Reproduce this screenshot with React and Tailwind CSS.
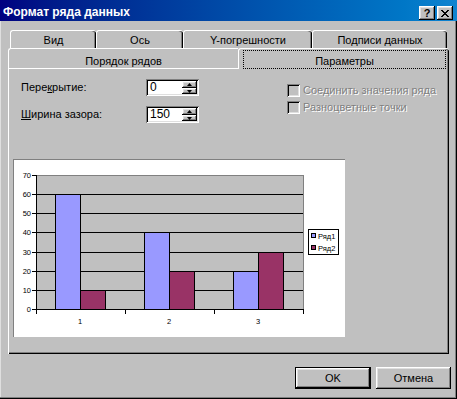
import React from "react";

const raised =
  "shadow-[inset_-1px_-1px_0_#000,inset_1px_1px_0_#fff,inset_-2px_-2px_0_#808080,inset_2px_2px_0_#dfdfdf]";
const sunken =
  "shadow-[inset_1px_1px_0_#808080,inset_-1px_-1px_0_#fff,inset_2px_2px_0_#000,inset_-2px_-2px_0_#dfdfdf]";

function Arrow({ up }) {
  return (
    <svg width="5" height="3" viewBox="0 0 5 3">
      <polygon points={up ? "2.5,0 5,3 0,3" : "0,0 5,0 2.5,3"} fill="#000" />
    </svg>
  );
}

function Field({ value }) {
  return (
    <div className={`w-[53px] h-[17px] bg-white flex items-stretch p-[2px] ${sunken}`}>
      <div className="flex-1 pl-[2px] leading-[13px] text-[12px]">{value}</div>
      <div className="w-[15px] flex flex-col">
        <div className={`h-[7px] bg-[#c0c0c0] flex items-center justify-center ${raised}`}>
          <Arrow up />
        </div>
        <div className={`h-[6px] bg-[#c0c0c0] flex items-center justify-center ${raised}`}>
          <Arrow />
        </div>
      </div>
    </div>
  );
}

function Check() {
  return <div className={`w-[13px] h-[13px] bg-[#c0c0c0] ${sunken}`} />;
}

function Tab({ w, children }) {
  return (
    <div
      className={`${w} h-full flex justify-center pt-[3px] border-t border-l border-white rounded-tl-[3px] rounded-tr-[3px] shadow-[inset_-1px_0_0_#000,inset_-2px_0_0_#808080]`}
    >
      {children}
    </div>
  );
}

function Chart() {
  const grid = [309, 290, 271, 252, 232, 213, 194, 175];
  const labels = ["0", "10", "20", "30", "40", "50", "60", "70"];
  const bars = [
    [55, 194, "#9999ff"],
    [80, 290, "#993366"],
    [144, 232, "#9999ff"],
    [169, 271, "#993366"],
    [233, 271, "#9999ff"],
    [258, 252, "#993366"],
  ];
  return (
    <svg width="331" height="177" viewBox="14 160 331 177" shapeRendering="crispEdges">
      <rect x="36" y="175" width="267" height="134" fill="#c0c0c0" />
      <line x1="36" y1="175.5" x2="303" y2="175.5" stroke="#808080" />
      <line x1="303.5" y1="175" x2="303.5" y2="309" stroke="#808080" />
      {grid.slice(1, 7).map((y) => (
        <line key={y} x1="36" y1={y + 0.5} x2="303" y2={y + 0.5} stroke="#000" />
      ))}
      {bars.map(([x, y, c], i) => (
        <rect key={i} x={x + 0.5} y={y + 0.5} width="25" height={309 - y} fill={c} stroke="#000" />
      ))}
      <line x1="36.5" y1="175" x2="36.5" y2="310" stroke="#000" />
      <line x1="36" y1="309.5" x2="304" y2="309.5" stroke="#000" />
      {grid.map((y, i) => (
        <g key={y}>
          <line x1="32" y1={y + 0.5} x2="36" y2={y + 0.5} stroke="#000" />
          <text
            x="31"
            y={y + 3}
            textAnchor="end"
            fontSize="7.5"
            fontFamily="Liberation Sans, Arial, sans-serif"
            fill="#000"
          >
            {labels[i]}
          </text>
        </g>
      ))}
      {[36, 125, 214, 303].map((x) => (
        <line key={x} x1={x + 0.5} y1="309" x2={x + 0.5} y2="314" stroke="#000" />
      ))}
      {[
        [80, "1"],
        [169, "2"],
        [258, "3"],
      ].map(([x, t]) => (
        <text
          key={t}
          x={x}
          y="324"
          textAnchor="middle"
          fontSize="7.5"
          fontFamily="Liberation Sans, Arial, sans-serif"
          fill="#000"
        >
          {t}
        </text>
      ))}
      <rect x="308.5" y="229.5" width="30" height="25" fill="#fff" stroke="#000" />
      <rect x="311.5" y="233.5" width="4" height="4" fill="#9999ff" stroke="#000" />
      <rect x="311.5" y="245.5" width="4" height="4" fill="#993366" stroke="#000" />
      <text x="318" y="238.5" fontSize="7.5" fontFamily="Liberation Sans, Arial, sans-serif" fill="#000">
        Ряд1
      </text>
      <text x="318" y="250.5" fontSize="7.5" fontFamily="Liberation Sans, Arial, sans-serif" fill="#000">
        Ряд2
      </text>
    </svg>
  );
}

export default function App() {
  return (
    <div
      className={`w-[457px] h-[399px] bg-[#c0c0c0] flex flex-col font-['Liberation_Sans',Arial,sans-serif] text-[11px] leading-[13px] text-black shadow-[inset_-1px_-1px_0_#000,inset_-2px_-2px_0_#808080,inset_1px_0_0_#dfdfdf]`}
    >
      <div className="h-[21px] bg-linear-to-r from-[#000080] to-[#1084d0] flex items-start pt-[5px] pl-[3px] pr-[4px]">
        <div className="flex-1 text-white font-bold text-[12px] leading-[15px]">Формат ряда данных</div>
        <div className="flex gap-[2px] pt-[1px]">
          <div className={`w-[16px] h-[14px] bg-[#c0c0c0] flex items-center justify-center font-bold text-[11px] leading-[11px] ${raised}`}>
            ?
          </div>
          <div className={`w-[16px] h-[14px] bg-[#c0c0c0] flex items-center justify-center ${raised}`}>
            <svg width="8" height="7" viewBox="0 0 8 7" shapeRendering="crispEdges">
              <path d="M0 0h2v1h-2zM6 0h2v1h-2zM1 1h2v1h-2zM5 1h2v1h-2zM2 2h4v1h-4zM3 3h2v1h-2zM2 4h4v1h-4zM1 5h2v1h-2zM5 5h2v1h-2zM0 6h2v1h-2zM6 6h2v1h-2z" fill="#000" />
            </svg>
          </div>
        </div>
      </div>

      <div className="mt-[9px] ml-[10px] h-[18px] flex">
        <Tab w="w-[86px]">Вид</Tab>
        <Tab w="w-[87px]">Ось</Tab>
        <Tab w="w-[129px]">Y-погрешности</Tab>
        <Tab w="w-[135px]">Подписи данных</Tab>
      </div>

      <div className="ml-[8px] h-[21px] flex">
        <div className="w-[230px] h-full flex justify-center pt-[6px] border-t border-l border-b border-white rounded-tl-[3px]">
          Порядок рядов
        </div>
        <div className="w-[211px] h-full flex pl-[4px] pr-[3px] pt-[1px] border-t border-l border-white rounded-tl-[3px] rounded-tr-[3px] shadow-[inset_-1px_0_0_#000,inset_-2px_0_0_#808080]">
          <div className="flex-1 border border-dotted border-black flex justify-center pt-[4px]">Параметры</div>
        </div>
      </div>

      <div className="ml-[8px] w-[441px] h-[285px] border-l border-white shadow-[inset_-1px_-1px_0_#000,inset_-2px_-2px_0_#808080] flex flex-col">
        <div className="flex pt-[10px] pl-[12px]">
          <div className="flex flex-col gap-[10px]">
            <div className="flex items-center h-[17px]">
              <span className="w-[125px]">
                Пере<u>к</u>рытие:
              </span>
              <Field value="0" />
            </div>
            <div className="flex items-center h-[17px]">
              <span className="w-[125px]">
                <u>Ш</u>ирина зазора:
              </span>
              <Field value="150" />
            </div>
          </div>
          <div className="ml-[88px] pt-[5px] flex flex-col gap-[4px] text-[#808080] [text-shadow:1px_1px_0_#fff]">
            <div className="flex items-center gap-[3px] h-[13px]">
              <Check />
              <span>Соединить значения ряда</span>
            </div>
            <div className="flex items-center gap-[3px] h-[13px]">
              <Check />
              <span>Разноцветные точки</span>
            </div>
          </div>
        </div>
        <div className="mt-[36px] ml-[4px] w-[332px] h-[178px] border-t border-l border-[#808080] bg-white">
          <Chart />
        </div>
      </div>

      <div className="mt-[13px] flex justify-end gap-[5px] pr-[6px]">
        <div className="w-[76px] h-[22px] border border-black">
          <div className={`w-full h-full flex items-center justify-center ${raised}`}>OK</div>
        </div>
        <div className={`w-[75px] h-[22px] flex items-center justify-center ${raised}`}>Отмена</div>
      </div>
    </div>
  );
}
